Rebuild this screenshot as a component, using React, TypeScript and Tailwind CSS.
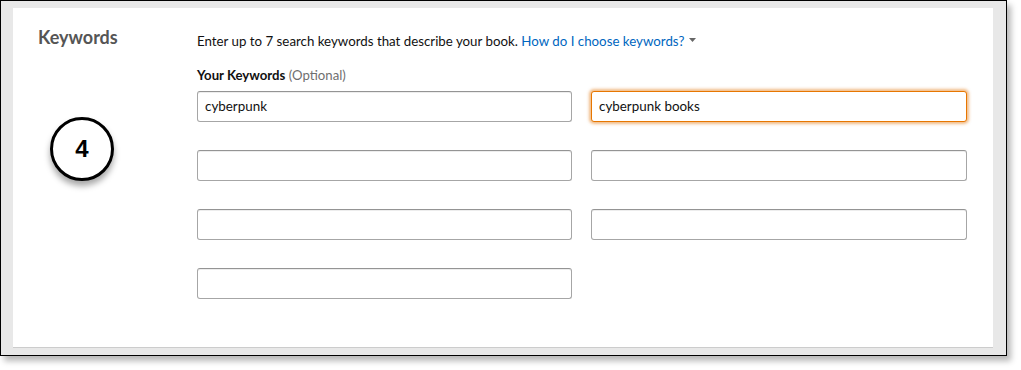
import React from "react";

const font = { fontFamily: "Lato, 'Open Sans', sans-serif" };

function Field({ value, focused }: { value?: string; focused?: boolean }) {
  return (
    <div
      className={
        focused
          ? "h-[31px] rounded-[3px] border border-[#e77600] bg-white px-[7px] flex items-center text-[13.4px] text-[#111] shadow-[0_0_3px_2px_rgba(228,121,17,0.5)]"
          : "h-[31px] rounded-[3px] border border-[#a6a6a6] border-t-[#949494] bg-white px-[7px] flex items-center text-[13.4px] text-[#111] shadow-[0_1px_0_rgba(255,255,255,0.5),inset_0_1px_0_rgba(0,0,0,0.07)]"
      }
    >
      {value}
    </div>
  );
}

export default function App() {
  return (
    <div className="bg-white w-[1021px] h-[370px]" style={font}>
      <div className="w-[1007px] h-[356px] border border-black bg-[#e8e8e8] shadow-[4px_5px_6px_rgba(0,0,0,0.28)] pt-[7px] pl-[12px]">
        <div className="w-[980px] h-[340px] bg-white border-b border-[#cccccc] flex">
          <div className="w-[184px] pl-[25px] pt-[17px] flex flex-col">
            <div className="text-[18px] leading-[24px] font-bold text-[#555]">Keywords</div>
            <div className="mt-[68px] ml-[12px] w-[64px] h-[64px] rounded-full border-[3px] border-black bg-white flex items-center justify-center shadow-[0_5px_6px_rgba(0,0,0,0.35)]">
              <span className="text-[24px] font-bold text-black" style={{ fontFamily: "'Liberation Sans', Arial, sans-serif" }}>4</span>
            </div>
          </div>
          <div className="w-[770px] pt-[24px]">
            <div className="text-[13.3px] leading-[18px] text-[#111] flex items-center">
              <span>Enter up to 7 search keywords that describe your book.&nbsp;</span>
              <span className="text-[#0066c0]">How do I choose keywords?</span>
              <svg width="7" height="4" viewBox="0 0 7 4" className="ml-[5px] mb-[2px]">
                <path d="M0 0 L7 0 L3.5 4 Z" fill="#666" />
              </svg>
            </div>
            <div className="mt-[16px] text-[13.2px] leading-[18px] text-[#111]">
              <span className="font-bold">Your Keywords</span>{" "}
              <span className="text-[#6f6f6f]">(Optional)</span>
            </div>
            <div className="mt-[7px] grid grid-cols-[375px_376px] gap-x-[19px] gap-y-[28px]">
              <Field value="cyberpunk" />
              <Field value="cyberpunk books" focused />
              <Field />
              <Field />
              <Field />
              <Field />
              <Field />
            </div>
          </div>
        </div>
      </div>
    </div>
  );
}
